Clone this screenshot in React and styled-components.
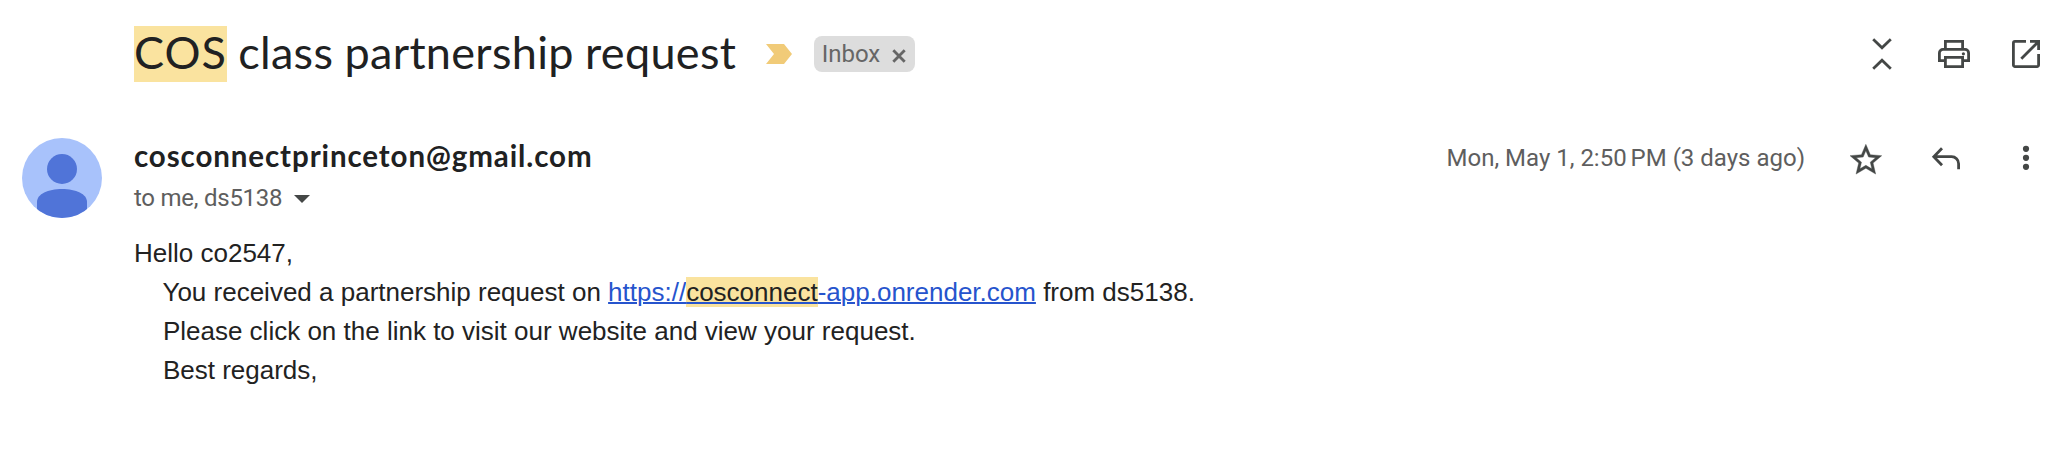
import React from 'react';
import styled, { createGlobalStyle } from 'styled-components';

const GlobalStyle = createGlobalStyle`
  body {
    margin: 0;
    background: #fff;
    color: #202122;
  }
`;

const Thread = styled.main`
  display: flex;
  flex-direction: column;
  height: 460px;
  box-sizing: border-box;
  padding: 0 24px 0 22px;
  background: #fff;
  overflow: hidden;
`;

const SubjectBar = styled.header`
  display: flex;
  align-items: center;
  height: 108px;
  padding-left: 112px;
`;

const Subject = styled.h1`
  margin: 0;
  font: 400 45px/53px Lato, 'Open Sans', sans-serif;
  letter-spacing: 0.31px;
  white-space: nowrap;
`;

const SubjectMatch = styled.mark`
  display: inline-block;
  padding-bottom: 3px;
  background: #fae39f;
  color: inherit;
  letter-spacing: 1px;
`;

const SubjectRest = styled.span`
  word-spacing: -0.5px;
`;

const ImportanceMarker = styled.svg`
  width: 26px;
  height: 20px;
  margin: 0 22px 0 30px;
  fill: #f1cb78;
`;

const LabelChip = styled.span`
  display: flex;
  align-items: center;
  box-sizing: border-box;
  width: 101px;
  height: 36px;
  padding: 0 9px 0 7.5px;
  justify-content: space-between;
  border-radius: 8px;
  background: #ddd;
  color: #666;
  font: 400 24px/36px Roboto, sans-serif;
`;

const RemoveIcon = styled.svg`
  width: 14px;
  height: 14px;
  margin-top: 4px;
  fill: none;
  stroke: #666;
  stroke-width: 2.8;
`;

const Actions = styled.div`
  display: flex;
  align-items: center;
  gap: ${(p) => p.$gap}px;
  margin-left: auto;
`;

const IconButton = styled.button`
  display: flex;
  width: 40px;
  height: 40px;
  padding: 0;
  border: 0;
  background: none;
  color: #444746;
`;

const Glyph = styled.svg`
  width: 40px;
  height: 40px;
  fill: none;
  stroke: currentColor;
  stroke-width: 2.8;
`;

const Solid = styled.g`
  fill: currentColor;
  stroke: none;
`;

const MessageHead = styled.section`
  display: flex;
  align-items: flex-start;
  height: 98px;
  padding-top: 28px;
  box-sizing: content-box;
`;

const Avatar = styled.svg`
  flex: none;
  width: 80px;
  height: 80px;
  margin: 2px 32px 0 0;
`;

const Participants = styled.div`
  display: flex;
  flex-direction: column;
  gap: 3px;
`;

const Sender = styled.strong`
  font: 700 29.5px/40px Lato, 'Open Sans', sans-serif;
  letter-spacing: 0.9px;
`;

const Recipients = styled.span`
  display: flex;
  align-items: center;
  gap: 12px;
  color: #5e5e5e;
  font: 400 24px/38px Roboto, sans-serif;
  letter-spacing: -0.25px;
`;

const Caret = styled.svg`
  width: 16px;
  height: 8px;
  margin-top: 2px;
  fill: #444746;
`;

const MessageTools = styled(Actions)`
  padding-top: 2px;
`;

const Timestamp = styled.time`
  padding-right: 1px;
  color: #5e5e5e;
  font: 400 24px/40px Roboto, sans-serif;
  white-space: nowrap;
`;

const NarrowSpace = styled.span`
  word-spacing: -2px;
`;

const MessageBody = styled.article`
  padding-left: 112px;
  color: #222;
  font: 400 26px/39px 'Liberation Sans', Arial, sans-serif;
  white-space: pre;
`;

const Line = styled.div`
  height: 39px;
`;

const BodyLink = styled.a`
  color: #2654cd;
  text-decoration: underline;
  text-decoration-thickness: 2px;
`;

const LinkMatch = styled.mark`
  background: #fae39f;
  color: #222;
`;

function Action({ label, children }) {
  return (
    <IconButton type="button" aria-label={label}>
      <Glyph viewBox="0 0 40 40">{children}</Glyph>
    </IconButton>
  );
}

export default function App() {
  return (
    <>
      <GlobalStyle />
      <Thread>
        <SubjectBar>
          <Subject>
            <SubjectMatch>COS</SubjectMatch>
            <SubjectRest> class partnership request</SubjectRest>
          </Subject>
          <ImportanceMarker viewBox="0 0 26 20">
            <path d="M0 0h18l8 10-8 10H0l8-10z" />
          </ImportanceMarker>
          <LabelChip>
            Inbox
            <RemoveIcon viewBox="0 0 14 14">
              <path d="M1.3 1.3l11.4 11.4M12.7 1.3L1.3 12.7" />
            </RemoveIcon>
          </LabelChip>
          <Actions $gap={32}>
            <Action label="Collapse all">
              <path d="M11.2 5.3L20 13.7l8.8-8.4M11.2 34.7L20 26.3l8.8 8.4" />
            </Action>
            <Action label="Print all">
              <path d="M11.4 15.4v-8h17.2v8M11.4 26.6h-6V19A3.6 3.6 0 0 1 9 15.4h22a3.6 3.6 0 0 1 3.6 3.6v7.6h-6M11.4 23.4h17.2v9.2H11.4z" />
              <Solid>
                <circle cx="29.4" cy="19.8" r="1.6" />
              </Solid>
            </Action>
            <Action label="Open in new window">
              <path d="M20 7.4H9A1.6 1.6 0 0 0 7.4 9v22A1.6 1.6 0 0 0 9 32.6h22a1.6 1.6 0 0 0 1.6-1.6V20M24 7.4h8.6V16M15.3 24.7L32.6 7.4" />
            </Action>
          </Actions>
        </SubjectBar>

        <MessageHead>
          <Avatar viewBox="0 0 80 80">
            <clipPath id="avatar-disc">
              <circle cx="40" cy="40" r="40" />
            </clipPath>
            <g clipPath="url(#avatar-disc)">
              <rect width="80" height="80" fill="#a8c2fb" />
              <circle cx="40" cy="31" r="15" fill="#5074d8" />
              <path d="M15 80V64c0-8 11-13 25-13s25 5 25 13v16z" fill="#5074d8" />
            </g>
          </Avatar>
          <Participants>
            <Sender>cosconnectprinceton@gmail.com</Sender>
            <Recipients>
              to me, ds5138
              <Caret viewBox="0 0 16 8">
                <path d="M0 0h16L8 8z" />
              </Caret>
            </Recipients>
          </Participants>
          <MessageTools $gap={40}>
            <Timestamp>
              Mon, May 1, 2:50<NarrowSpace> </NarrowSpace>PM (3 days ago)
            </Timestamp>
            <Action label="Star">
              <Solid transform="translate(.85 3.2) scale(1.585 1.565)">
                <path
                  stroke="currentColor"
                  strokeWidth=".25"
                  d="M22 9.24l-7.19-.62L12 2 9.19 8.63 2 9.24l5.46 4.73L5.82 21 12 17.27 18.18 21l-1.63-7.03L22 9.24zM12 15.4l-3.76 2.27 1-4.28-3.32-2.88 4.38-.38L12 6.1l1.71 4.04 4.38.38-3.32 2.88 1 4.28L12 15.4z"
                />
              </Solid>
            </Action>
            <Action label="Reply">
              <path d="M16 10.2l-8.2 8.5 8.2 8.5M8 18.7h17.6a7 7 0 0 1 7 7v5.6" />
            </Action>
            <Action label="More">
              <Solid>
                <circle cx="20" cy="10.8" r="3.1" />
                <circle cx="20" cy="19.8" r="3.1" />
                <circle cx="20" cy="28.8" r="3.1" />
              </Solid>
            </Action>
          </MessageTools>
        </MessageHead>

        <MessageBody>
          <Line>Hello co2547,</Line>
          <Line>
            {'    You received a partnership request on '}
            <BodyLink>
              https://<LinkMatch>cosconnect</LinkMatch>-app.onrender.com
            </BodyLink>
            {' from ds5138.'}
          </Line>
          <Line>{'    Please click on the link to visit our website and view your request.'}</Line>
          <Line>{'    Best regards,'}</Line>
        </MessageBody>
      </Thread>
    </>
  );
}
